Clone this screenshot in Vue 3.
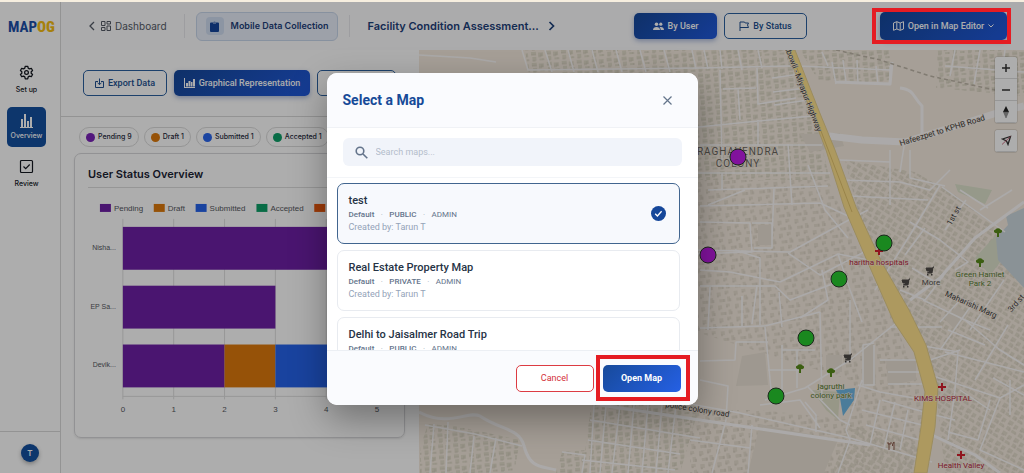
<script setup>
import { ref } from 'vue'

const chips = [
  { label: 'Pending 9', color: '#7a22b8' },
  { label: 'Draft 1', color: '#dd7a0c' },
  { label: 'Submitted 1', color: '#2a66ee' },
  { label: 'Accepted 1', color: '#0d9f68' },
]
const legend = [
  { label: 'Pending', color: '#6e1fa6', x: 25 },
  { label: 'Draft', color: '#dd7a0c', x: 79 },
  { label: 'Submitted', color: '#2563eb', x: 121 },
  { label: 'Accepted', color: '#0d9f68', x: 182 },
  { label: '', color: '#ea580c', x: 240 },
]
const rows = [
  { name: 'Nisha...', parts: [{ from: 0, n: 4.5, color: '#6e1fa6' }] },
  { name: 'EP Sa...', parts: [{ from: 0, n: 3, color: '#6e1fa6' }] },
  {
    name: 'Devik...',
    parts: [
      { from: 0, n: 2, color: '#6e1fa6' },
      { from: 2, n: 1, color: '#dd7a0c' },
      { from: 3, n: 1.5, color: '#2563eb' },
    ],
  },
]
const unit = 51
const maps = [
  { id: 1, name: 'test', access: 'PUBLIC' },
  { id: 2, name: 'Real Estate Property Map', access: 'PRIVATE' },
  { id: 3, name: 'Delhi to Jaisalmer Road Trip', access: 'PUBLIC' },
]
const selected = ref(1)
const query = ref('')

const blocks = [
  { d: 'M525 50H790L818 130L830 180H698V80H530Z', p: 'a' },
  { d: 'M800 50H890V84L818 80Z', p: 'a' },
  { d: 'M936 50H1024V96L936 88Z', p: 'a' },
  { d: 'M690 180H828L850 230L898 330L925 400L915 473H690V410H760L850 420V380L690 330Z', p: 'b' },
  { d: 'M845 160L915 172L955 195L1024 250V473H945L935 380L900 300L860 220Z', p: 'c' },
  { d: 'M428 424L455 426L520 440L514 473H420V448Z', p: 'a' },
  { d: 'M592 400L700 404L680 473H556L562 452L585 450Z', p: 'a' },
  { d: 'M700 410L750 424L735 473H690Z', p: 'b' },
  { d: 'M850 425L915 440V473H832Z', p: 'c' },
]
const plain = [
  'M742 356L765 352L768 385L736 386Z', 'M760 424L838 440L824 473H748Z',
  'M826 355H842V372H826Z', 'M758 225H772V245H758Z', 'M886 360H916V380L888 386Z',
  'M863 345L874 343L876 384H862Z', 'M944 318L958 306L968 314L955 330Z', 'M800 134L840 133L844 146L810 152Z',
]
const roads = [
  'M419 55L470 58L496 62', 'M522 50L528 70L700 68L790 66', 'M545 50L552 72M568 50L574 72M592 50L598 72M616 50L622 72M640 50L646 72M664 50L670 72M692 50L696 69M704 50L708 69M720 50L722 69M738 50L742 70M758 50L762 68',
  'M720 70L722 160M757 68L758 104L796 98M723 89L756 88M738 89L740 120M698 127L770 120L812 116M772 78L800 74M773 92L806 88M774 105L808 100M700 145H822M788 144L792 205M758 120V145',
  'M798 66L890 70M822 52L828 66M832 62L836 84M843 60L846 82M857 60L858 84M876 66L878 84M890 66V84M955 50L950 76M980 50L974 84M1005 50L1000 90M945 66L1024 72',
  'M698 173H830M708 190L828 186M722 173V190M708 205L745 190M700 206L820 203L848 216M700 222L750 223L752 252L690 254M752 223H772V248H754M774 188L772 240M698 250L790 252L845 222L868 210',
  'M788 253L820 275L868 250M700 270L730 272L780 282L838 254L880 262M700 286H775L790 300L848 278M735 250L760 258V325M710 287L708 330M742 296V327M700 328L765 326L820 312M757 285L752 324',
  'M808 165L825 210L848 238M838 254L850 290L862 322M822 270L828 300L800 318M779 292L782 327M820 312L822 400M850 300V360',
  'M700 361L735 360L736 342L768 342M765 327L772 400M782 350H815M797 350V388M768 370H800M765 400L805 388L850 360L895 324M782 345V400M808 387L840 420L850 425',
  'M700 380L728 386L726 420M690 404L740 413L850 438L932 462M726 420L712 473M690 440L750 448M752 425L748 473M760 405L800 400L820 428M805 402L816 415V432',
  'M850 440L838 473M862 380L846 430L850 440M858 385L880 392L925 400M874 345V385H863V345L874 343M880 360H918M888 372H922M888 384H925M882 400L924 412M880 400L870 445M895 402L884 448M908 410L900 450M866 425L920 440M862 410L922 425',
  'M890 327H942M912 268L940 285M900 290L925 300L944 275M842 180L900 182L930 190L950 170M850 196L928 200M890 150V205M910 150V178L945 186M905 140L900 172M840 160L890 162',
  'M940 185L910 235L875 290M910 222L940 240L968 262L955 270M942 187L1005 232M966 200L945 230M925 228L905 255M980 210L1012 190M960 190L988 208',
  'M923 300L965 320L1000 350L1024 365M1008 325L975 380M975 300L940 350M948 330L985 345M940 322L960 300M918 345L958 352L955 390M945 352L1024 372M990 330L960 318M1004 280L970 330M930 360L960 350',
  'M930 375L1000 398L1024 385M955 390L948 440M990 400L978 440L948 432M1000 398L980 450L1024 470M993 378L1024 395M935 415L955 420M1010 380V415M960 390L990 410',
  'M434 424L430 473M448 422L446 473M474 436L470 473M496 438L490 473M425 425L475 434L522 446M562 452L585 455L582 473M594 405L590 473M606 405L600 473M620 405L612 473M634 405L628 473M648 405L642 473M662 405L656 473M676 405L668 473M590 420L700 438M588 440L680 454M582 460L675 470',
]
const mainRoads = [
  'M1024 202L975 238L940 278L910 300', 'M932 435L975 455L1000 473',
  'M419 412C450 428 468 410 480 416C500 430 520 428 524 446C530 468 540 466 556 470', 'M900 88C915 90 912 96 922 106V140M835 82L890 84L892 62', 'M600 405L700 420L870 445',
]
const pins = [
  { x: 738, y: 157, color: '#c01ce8' }, { x: 708, y: 255, color: '#c01ce8' },
  { x: 884, y: 243, color: '#27c92f' }, { x: 839, y: 279, color: '#27c92f' },
  { x: 806, y: 338, color: '#27c92f' }, { x: 776, y: 396, color: '#27c92f' },
]
const crosses = [[879, 251], [942, 387], [961, 455]]
const trees = [[998, 233], [980, 263], [831, 373], [800, 369]]
const carts = [[930, 271], [906, 283], [848, 358]]
</script>

<template>
  <div class="page">
    <div class="strip"></div>
    <div class="app">
      <aside class="sidebar">
        <div class="logo"><span>MAP</span><b>OG</b></div>
        <nav>
          <a href="#setup" class="nav-item">
            <svg width="15" height="15" viewBox="0 0 24 24" fill="none" stroke="currentColor" stroke-width="2" stroke-linejoin="round"><path d="M10 2h4l.7 3 2 1.2 3-.9 2 3.500-2.200 2.100v2.200l2.200 2.100-2 3.500-3-.9-2 1.200L14 22h-4l-.7-3-2-1.200-3 .9-2-3.500 2.200-2.100v-2.200L2.300 8.800l2-3.500 3 .9 2-1.200z"/><circle cx="12" cy="12" r="3"/></svg>
            <span>Set up</span>
          </a>
          <a href="#overview" class="nav-item active">
            <svg width="15" height="15" viewBox="0 0 15 15" fill="currentColor"><path d="M2 6h2v8H2zM5 1h2v13H5zM8 8h2v6H8zM11 4h2v10h-2zM1 14h13v1H1z"/></svg>
            <span>Overview</span>
          </a>
          <a href="#review" class="nav-item">
            <svg width="15" height="15" viewBox="0 0 15 15" fill="none" stroke="currentColor" stroke-width="1.200"><rect x="1.500" y="1.500" width="12" height="12" rx="1"/><path d="M4.500 7.500l2.200 2.200 4-4.200"/></svg>
            <span>Review</span>
          </a>
        </nav>
        <div class="account"><button class="avatar" aria-label="Account">T</button></div>
      </aside>

      <div class="main">
        <header class="topbar">
          <div class="crumbs">
            <a href="#dashboard" class="dash">
              <svg width="6" height="10" viewBox="0 0 6 10" fill="none" stroke="currentColor" stroke-width="1.300"><path d="M5 1L1 5l4 4"/></svg>
              <svg class="grid-icon" width="10" height="10" viewBox="0 0 10 10" fill="none" stroke="currentColor"><path d="M.5 .5h3.500v4H.5zM6 .5h3.500v2.500H6zM.5 6.500h3.500v3H.5zM6 5h3.500v4.500H6z"/></svg>
              <span>Dashboard</span>
            </a>
            <button class="project">
              <i><svg width="9" height="11" viewBox="0 0 9 11" fill="#14459c"><path d="M1 1.500h2C3 .5 6 .5 6 1.500h2a1 1 0 0 1 1 1V10a1 1 0 0 1-1 1H1a1 1 0 0 1-1-1V2.500a1 1 0 0 1 1-1z"/><path d="M3 1.500h3v1H3z" fill="#c9d8f2"/></svg></i>
              Mobile Data Collection
            </button>
            <div class="form-name">
              <strong>Facility Condition Assessment...</strong>
              <svg width="7" height="10" viewBox="0 0 7 10" fill="none" stroke="currentColor" stroke-width="1.700"><path d="M1.500 1l4 4-4 4"/></svg>
            </div>
          </div>
          <div class="switch">
            <button class="btn primary">
              <svg width="11" height="9" viewBox="0 0 11 9" fill="currentColor"><circle cx="3.500" cy="2.200" r="1.800"/><circle cx="7.800" cy="2.200" r="1.600"/><path d="M0 8c0-2 1.500-3 3.500-3S7 6 7 8zM7.700 8c0-1.200-.4-2.200-1.200-2.800C9 4.500 11 5.800 11 8z"/></svg>
              By User
            </button>
            <button class="btn outline">
              <svg width="10" height="10" viewBox="0 0 10 10" fill="none" stroke="currentColor"><path d="M1 10V1h4.500l.7 1H9.500L8.500 4l1 2.500H1"/></svg>
              By Status
            </button>
          </div>
          <button class="btn primary editor marked">
            <svg width="11" height="10" viewBox="0 0 11 10" fill="none" stroke="currentColor" stroke-linejoin="round"><path d="M.5 2L3.800.7 7.200 2 10.500.7V8L7.200 9.300 3.800 8 .5 9.300zM3.800.7V8M7.200 2v7.300"/></svg>
            Open in Map Editor
            <svg width="6" height="4" viewBox="0 0 6 4" fill="none" stroke="currentColor"><path d="M.5.500L3 3 5.500.500"/></svg>
          </button>
        </header>

        <div class="content">
          <section class="panel">
            <div class="tools">
              <button class="btn outline export">
                <svg width="9" height="10" viewBox="0 0 9 10" fill="none" stroke="currentColor"><path d="M3 3.500H.5v6h8v-6H6M4.500.5v6M2.500 4.700l2 2 2-2"/></svg>
                Export Data
              </button>
              <button class="btn primary graph">
                <svg width="11" height="10" viewBox="0 0 11 10" fill="currentColor"><path d="M0 0h1v9h10v1H0zM2 5h2v3.500H2zM4.500 3h2v5.500h-2zM7 4h1.500v4.500H7zM9 1h2v7.500H9z"/></svg>
                Graphical Representation
              </button>
              <button class="btn outline table-view" aria-label="Table view"></button>
            </div>
            <div class="chips">
              <span v-for="c in chips" :key="c.label" class="chip"><i :style="{ background: c.color }"></i>{{ c.label }}</span>
            </div>
            <div class="card">
              <h2>User Status Overview</h2>
              <svg class="chart" viewBox="0 0 330 235" role="img" aria-label="User status by person">
                <g v-for="l in legend" :key="l.x">
                  <rect :x="l.x" y="16" width="11" height="8" :fill="l.color" />
                  <text v-if="l.label" :x="l.x + 14" y="23">{{ l.label }}</text>
                </g>
                <g v-for="t in 6" :key="t">
                  <path :d="`M${48 + (t - 1) * unit} 31V212`" stroke="#dfdfdf" />
                  <text :x="48 + (t - 1) * unit" y="225" text-anchor="middle">{{ t - 1 }}</text>
                </g>
                <path d="M48 209H304" stroke="#dfdfdf" />
                <g v-for="(r, i) in rows" :key="r.name">
                  <rect v-for="p in r.parts" :key="p.from" :x="48 + p.from * unit" :y="39 + i * 59" :width="p.n * unit" height="43" :fill="p.color" />
                  <text class="small" x="41" :y="62 + i * 59" text-anchor="end">{{ r.name }}</text>
                </g>
              </svg>
            </div>
          </section>

          <section class="map">
            <svg class="canvas" viewBox="419 50 605 423" preserveAspectRatio="xMidYMid slice">
              <defs>
                <pattern id="a" width="15" height="11" patternUnits="userSpaceOnUse" patternTransform="rotate(-4)">
                  <path d="M1 1h5v3H1zM8 2h5v4H8zM2 6h4v4H2zM9 8h4v2H9z" fill="#e2dccb" /><path d="M1 4h5M8 6h3v-3M2 10h3M13 10v-2" stroke="#cbc5b3" fill="none" stroke-width=".7" />
                </pattern>
                <pattern id="b" width="17" height="13" patternUnits="userSpaceOnUse" patternTransform="rotate(-6)">
                  <path d="M2 2h4v4H2zM10 1h4v3h-4zM4 9h5v3H4zM12 7h3v5h-3z" fill="#e6ddcf" /><path d="M2 6h2M10 4h2M9 12V9M15 12v-3" stroke="#cbc3b4" fill="none" stroke-width=".7" />
                </pattern>
                <pattern id="c" width="14" height="12" patternUnits="userSpaceOnUse" patternTransform="rotate(32)">
                  <path d="M1 1h5v4H1zM8 2h4v4H8zM2 7h4v4H2zM8 8h5v3H8z" fill="#e4dccc" /><path d="M1 5h3M8 6h2M6 11V8M13 11V9" stroke="#cbc3b4" fill="none" stroke-width=".7" />
                </pattern>
              </defs>
              <path d="M419 50h605v423H419z" fill="#f5ebdf" />
              <path v-for="b in blocks" :key="b.d" :d="b.d" :fill="`url(#${b.p})`" />
              <path v-for="p in plain" :key="p" :d="p" fill="#e9e1d4" />
              <path d="M955 184L992 190L985 204L958 192ZM975 258L995 236L1010 250L990 275Z" fill="#dde2cc" />
              <path d="M996 238L1008 225L1006 216L1024 208V288L998 260Z" fill="#ccd8de" />
              <path d="M812 390L840 392L838 420L826 410Z" fill="#dfdfc8" />
              <path d="M836 390L855 388L854 400L843 416L840 398Z" fill="#6fb7e4" />
              <g fill="none" stroke="#fcfafa" stroke-linejoin="round">
                <path v-for="r in roads" :key="r" :d="r" stroke-width="1.500" />
                <path v-for="r in mainRoads" :key="r" :d="r" stroke-width="3" />
                <path d="M829 136L862 140L905 142L1000 112L1024 106" stroke-width="7" />
              </g>
              <path d="M836 50L880 60L930 76L995 90" fill="none" stroke="#beb6a8" stroke-width="1.500" stroke-dasharray="4 3" />
              <path d="M786 50L811 111L826 150L844 207L868 263L894 322L914 352L925 392L921 427L914 473H927L935 427L938 387L926 345L909 310L882 263L856 207L835 150L819 111L795 50Z" fill="#ffe28c" stroke="#e5cf8c" />
              <path d="M790 50L816 118L834 165L852 212" fill="none" stroke="#d9ba66" stroke-width=".8" />
              <g class="place">
                <text class="area" x="738" y="155">RAGHAVENDRA</text>
                <text class="area" x="738" y="167">COLONY</text>
                <text class="road" text-anchor="end" transform="translate(817 132) rotate(69)">hibowli - Miyapur Highway</text>
                <text class="road" transform="translate(943 133) rotate(-17)">Hafeezpet to KPHB Road</text>
                <text class="road" transform="translate(956 217) rotate(-60)">1st st</text>
                <text class="road" transform="translate(970 307) rotate(24)">Maharishi Marg</text>
                <text class="road" transform="translate(1018 305) rotate(-48)">3rd st</text>
                <text class="road" transform="translate(697 412) rotate(9)">police colony road</text>
                <text class="red" x="879" y="265">haritha hospitals</text>
                <text class="red" x="943" y="401">KIMS HOSPITAL</text>
                <text class="red" x="961" y="468">Health Valley</text>
                <text class="green" x="980" y="277">Green Hamlet</text>
                <text class="green" x="980" y="286">Park 2</text>
                <text class="green" x="831" y="389">jagruthi</text>
                <text class="green" x="831" y="398">colony park</text>
                <text class="shop" x="931" y="285">More</text>
              </g>
              <path v-for="c in crosses" :key="c[0]" :d="`M${c[0] - 4} ${c[1]}h8m-4 -4v8`" stroke="#d51f2d" stroke-width="2" />
              <g v-for="t in trees" :key="t[0]" :transform="`translate(${t[0]} ${t[1]})`">
                <path d="M-4-1a2 2 0 0 1 1.500-2.500a3 3 0 0 1 5 0A2 2 0 0 1 4-1Q3 .5 1 0V4H-1V0Q-3 .5-4-1z" fill="#598b1b" />
              </g>
              <g v-for="c in carts" :key="c[0]" :transform="`translate(${c[0]} ${c[1]})`">
                <path d="M4-4H3L2 2H-3M-4-3H2.500L2 0H-3z" fill="#4f4b48" stroke="#4f4b48" /><path d="M-3 3h1.500v1.500H-3zM1 3h1.500v1.500H1z" fill="#4f4b48" />
              </g>
              <path d="M889 443v7M888 442v2h3v-2M894 450v-8q-2 2-1.500 4" fill="none" stroke="#8b5d4c" />
              <circle v-for="p in pins" :key="p.x" :cx="p.x" :cy="p.y" r="8" :fill="p.color" stroke="#2b3a2b" />
            </svg>
            <div class="controls">
              <div class="stack">
                <button aria-label="Zoom in"><svg width="10" height="10" viewBox="0 0 10 10" stroke="#333" stroke-width="1.500"><path d="M1 5h8M5 1v8" /></svg></button>
                <button aria-label="Zoom out"><svg width="10" height="10" viewBox="0 0 10 10" stroke="#333" stroke-width="1.500"><path d="M1 5h8" /></svg></button>
                <button aria-label="Reset north"><svg width="8" height="14" viewBox="0 0 8 14"><path d="M4 1l3 6H1z" fill="#222" /><path d="M1.500 7h5L4 13z" fill="#999" stroke="#777" stroke-width=".5" /></svg></button>
              </div>
              <div class="stack">
                <button aria-label="Locate"><svg width="11" height="11" viewBox="0 0 11 11" fill="none" stroke="#333" stroke-width="1.300"><path d="M1.500 4L9.500 1.500 7 9.500 5.500 6z" /><path d="M1 9.500L9.500 1.500" stroke="#c0506a" stroke-width=".8" /></svg></button>
              </div>
            </div>
          </section>
        </div>
      </div>
    </div>

    <div class="overlay">
      <section class="dialog" role="dialog" aria-modal="true" aria-labelledby="dialog-title">
        <header>
          <h1 id="dialog-title">Select a Map</h1>
          <button class="close" aria-label="Close"><svg width="9" height="9" viewBox="0 0 9 9" stroke="#64748b" stroke-width="1.200"><path d="M.5.500l8 8M8.500.500l-8 8" /></svg></button>
        </header>
        <div class="search-row">
          <label class="search">
            <svg width="13" height="13" viewBox="0 0 13 13" fill="none" stroke="#64748b" stroke-width="1.600"><circle cx="5" cy="5" r="3.800" /><path d="M8 8l4.300 4.300" /></svg>
            <input v-model="query" type="text" placeholder="Search maps..." aria-label="Search maps" />
          </label>
        </div>
        <div class="list">
          <button v-for="m in maps" :key="m.id" class="item" :class="{ chosen: selected === m.id }" @click="selected = m.id">
            <span class="info">
              <span class="name">{{ m.name }}</span>
              <span class="meta"><b>Default</b><i>·</i><b>{{ m.access }}</b><i>·</i><span>ADMIN</span></span>
              <span class="by">Created by: Tarun T</span>
            </span>
            <svg v-if="selected === m.id" width="15" height="15" viewBox="0 0 15 15"><circle cx="7.500" cy="7.500" r="7.500" fill="#15479a" /><path d="M4.200 7.800l2.200 2.200 4.200-4.700" fill="none" stroke="#fff" stroke-width="1.300" /></svg>
          </button>
        </div>
        <footer>
          <button class="cancel">Cancel</button>
          <button class="open marked">Open Map</button>
        </footer>
      </section>
    </div>
  </div>
</template>

<style>
body { margin: 0; }
</style>

<style scoped>
* { box-sizing: border-box; }
button { font: inherit; padding: 0; cursor: pointer; }
a { color: inherit; text-decoration: none; }
.page { position: relative; display: flex; flex-direction: column; height: 100vh; overflow: hidden; background: #fff; font: 10px/14px Inter, "Liberation Sans", sans-serif; color: #1e293b; }
.strip { height: 2px; background: #f6eedf; }
.app { display: flex; flex: 1; min-height: 0; }
.sidebar { width: 61px; display: flex; flex-direction: column; border-right: 1px solid #d9d9d9; }
.logo { padding: 16px 0 0 8px; height: 58px; font: 700 15px/18px "Roboto Condensed", "Liberation Sans Narrow", "Liberation Sans", sans-serif; color: #1b4fa8; }
.logo b { color: #f5bd14; }
nav { display: flex; flex-direction: column; gap: 7px; padding-left: 7px; }
.nav-item { display: flex; flex-direction: column; align-items: center; justify-content: center; gap: 5px; width: 39px; height: 40px; border-radius: 5px; font: 500 7px/10px Inter, sans-serif; color: #14181f; }
.nav-item.active { gap: 3px; background: #14509f; color: #fff; }
.account { margin-top: auto; height: 42px; border-top: 1px solid #d9d9d9; display: flex; align-items: center; justify-content: center; }
.avatar { width: 18px; height: 18px; border: 0; border-radius: 50%; background: #14509f; color: #fff; font-size: 8px; font-weight: 600; box-shadow: 0 2px 4px rgba(0, 0, 0, .3); }
.main { flex: 1; min-width: 0; display: flex; flex-direction: column; }
.topbar { height: 48px; flex: none; display: flex; align-items: center; padding: 0 17px 0 28px; background: #fcfcfe; }
.crumbs { flex: 1; display: flex; align-items: center; white-space: nowrap; }
.dash { display: flex; align-items: center; padding-right: 17px; border-right: 1px solid #e8e8ec; font-size: 10px; line-height: 24px; color: #555b66; }
.grid-icon { margin: 0 4px 0 6px; }
.project { display: flex; align-items: center; gap: 7px; height: 29px; margin: 0 11px; padding: 0 8px 0 9px; border: 1px solid #c8d6ea; border-radius: 6px; background: #e8eef9; color: #1d4079; font-size: 9px; font-weight: 600; }
.project i { display: flex; align-items: center; justify-content: center; width: 18px; height: 18px; border-radius: 4px; background: #cfdcf0; }
.form-name { display: flex; align-items: center; gap: 9px; padding-left: 18px; border-left: 1px solid #e8e8ec; line-height: 22px; color: #1d4079; }
.form-name strong { font-size: 11px; font-weight: 600; }
.switch { display: flex; gap: 7px; margin-right: 73px; }
.btn { display: flex; align-items: center; justify-content: center; gap: 4px; height: 26px; border-radius: 5px; font: 500 9px/12px Roboto, sans-serif; white-space: nowrap; }
.primary { border: 0; background: linear-gradient(135deg, #16489a, #2059dc); color: #fff; box-shadow: 0 2px 5px rgba(20, 60, 150, .35); }
.outline { border: 1px solid #2c609f; background: #fff; color: #204f8f; }
.switch .btn { width: 83px; }
.editor { width: 127px; height: 28px; }
.marked { position: relative; }
.marked::after { content: ""; position: absolute; z-index: 20; border: 4px solid #e51c23; pointer-events: none; }
.editor::after { inset: -4px -4px -4px -8px; }
.content { flex: 1; min-height: 0; display: flex; }
.panel { width: 358px; flex: none; }
.tools { display: flex; gap: 7px; height: 67px; padding: 20px 0 0 22px; border-bottom: 1px solid #d9d9d9; }
.export { width: 84px; }
.graph { width: 136px; }
.table-view { width: 79px; }
.chips { display: flex; gap: 5px; padding: 10px 0 0 18px; height: 36px; overflow: hidden; }
.chip { display: flex; align-items: center; gap: 3px; height: 20px; padding: 0 6px; border: 1px solid #dcdcdc; border-radius: 10px; font-size: 7px; font-weight: 500; white-space: nowrap; }
.chip i { width: 9px; height: 9px; border-radius: 50%; }
.card { margin: 0 14px 0 13px; border: 1px solid #d8d8da; border-radius: 7px; box-shadow: 0 1px 2px rgba(0, 0, 0, .1); height: 285px; }
.card h2 { margin: 0 13px; padding: 12px 0 5px; border-bottom: 1px solid #dedede; font-size: 11px; line-height: 16px; font-weight: 600; color: #1a2233; }
.chart { display: block; width: 100%; font: 8px "Liberation Sans", sans-serif; fill: #55585e; }
.chart .small { font-size: 7px; }
.map { flex: 1; position: relative; min-width: 0; overflow: hidden; }
.canvas { display: block; width: 100%; height: 100%; }
.place { font-family: Roboto, sans-serif; font-size: 8px; text-anchor: middle; paint-order: stroke; stroke: #f5ebdf; stroke-width: 1px; }
.area { font-size: 10px; letter-spacing: 1px; fill: #6a6660; }
.road { fill: #3f3d3c; }
.red { fill: #b5273d; }
.green { fill: #587d32; }
.shop { fill: #555; }
.controls { position: absolute; top: 7px; right: 7px; display: flex; flex-direction: column; gap: 7px; }
.stack { width: 22px; border-radius: 3px; overflow: hidden; background: #fff; box-shadow: 0 0 0 1px rgba(0, 0, 0, .1); }
.stack button { display: flex; align-items: center; justify-content: center; width: 22px; height: 22px; border: 0; border-bottom: 1px solid #ddd; background: #fff; }
.overlay { position: absolute; inset: 2px 0 0; z-index: 10; display: flex; align-items: center; justify-content: center; padding-top: 3px; background: rgba(0, 0, 0, .32); font-family: Roboto, sans-serif; }
.dialog { width: 371px; display: flex; flex-direction: column; border-radius: 10px; background: #fff; box-shadow: 0 14px 36px rgba(0, 0, 0, .35); }
.dialog header { display: flex; align-items: center; justify-content: space-between; height: 55px; padding: 0 26px 0 16px; border-bottom: 1px solid #f0f2f6; border-radius: 10px 10px 0 0; background: #fafbfe; }
.dialog h1 { margin: 0; font-size: 14px; line-height: 20px; font-weight: 700; color: #164a98; }
.close { display: flex; border: 0; background: none; }
.search-row { padding: 10px 16px 11px; border-bottom: 1px solid #f3f5f8; }
.search { display: flex; align-items: center; gap: 8px; height: 28px; padding-left: 12px; border-radius: 6px; background: #f1f4fa; }
.search input { flex: 1; min-width: 0; padding: 0; border: 0; outline: 0; background: none; font: 9px/14px Roboto, sans-serif; color: #334155; }
.search input::placeholder { color: #b4bdcb; opacity: 1; }
.list { height: 172px; overflow: hidden; display: flex; flex-direction: column; gap: 6px; padding: 5px 18px 0 10px; }
.item { flex: none; display: flex; align-items: center; justify-content: space-between; height: 61px; padding: 0 13px 0 11px; border: 1px solid #e8ebf0; border-radius: 7px; background: #fff; text-align: left; }
.item.chosen { border-color: #41658f; background: #f7f9fd; }
.info { display: flex; flex-direction: column; }
.name { font-size: 11px; line-height: 15px; font-weight: 500; color: #263345; }
.meta { display: flex; gap: 6px; font-size: 8px; line-height: 13px; color: #64748b; }
.meta b { font-weight: 500; }
.meta i { width: 3px; font-style: normal; color: #a7b1c0; text-align: center; }
.by { font-size: 9px; line-height: 13px; color: #94a3b8; }
.dialog footer { display: flex; align-items: center; justify-content: flex-end; gap: 9px; height: 55px; padding: 0 17px; border-top: 1px solid #eceff4; border-radius: 0 0 10px 10px; background: #fafbfe; }
.cancel, .open { width: 78px; height: 27px; border-radius: 5px; font-size: 9px; }
.cancel { border: 1px solid #dc3b43; background: #fff; color: #d3303a; }
.open { border: 0; background: linear-gradient(135deg, #174a9b, #2560e4); color: #fff; font-weight: 700; }
.open::after { inset: -10px -9px -9px -7px; }
</style>
